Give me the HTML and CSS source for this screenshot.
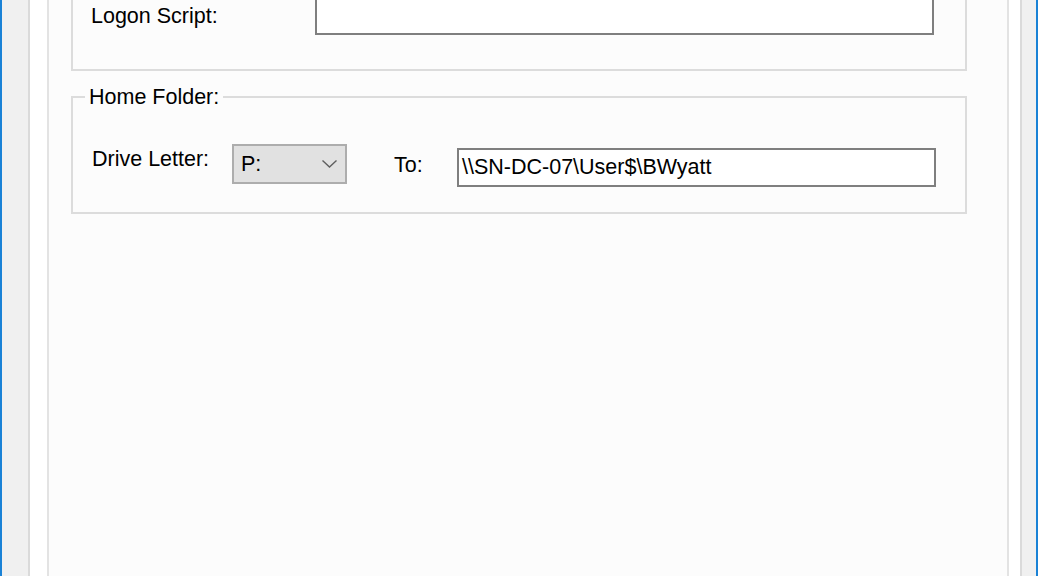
FILE: index.html
```html
<!DOCTYPE html>
<html lang="en">
<head>
  <meta charset="UTF-8">
  <meta name="viewport" content="width=device-width, initial-scale=1.0">
  <title>User Properties - Profile</title>
  <link rel="stylesheet" href="styles.css">
</head>
<body>
  <div class="window">
    <div class="tab-control">
      <div class="tab-page">
        <fieldset class="group group-logon">
          <div class="field-row logon-row">
            <label class="field-label logon-label">Logon Script:</label>
            <div class="text-box logon-box"></div>
          </div>
        </fieldset>

        <fieldset class="group group-home">
          <legend>Home Folder:</legend>
          <div class="field-row home-row">
            <label class="field-label drive-label">Drive Letter:</label>
            <div class="combo">
              <span>P:</span>
              <svg class="chevron" width="15" height="8" viewBox="0 0 15 8">
                <polyline points="0.5,0.5 7.5,7 14.5,0.5" fill="none" stroke="#5f5f5f" stroke-width="1.4"/>
              </svg>
            </div>
            <label class="field-label to-label">To:</label>
            <div class="text-box path-box">\\SN-DC-07\User$\BWyatt</div>
          </div>
        </fieldset>
      </div>
    </div>
  </div>
</body>
</html>
```

FILE: styles.css
```css
html, body {
  margin: 0;
  height: 100%;
}
body {
  font-family: "Liberation Sans", Arial, sans-serif;
  font-size: 21.5px;
  line-height: 1.15;
  color: #000;
  background-color: #f0f0f0;
  overflow: hidden;
}
.window {
  height: 576px;
  box-sizing: border-box;
  display: flex;
  background-color: #f0f0f0;
  border-left: 2px solid #1a82d6;
  border-right: 2px solid #1a82d6;
  padding: 0 14px 0 26px;
}
.tab-control {
  flex: 1;
  display: flex;
  background-color: #fff;
  border-left: 2px solid #dadada;
  border-right: 2px solid #dadada;
  padding: 0 11px 0 17px;
}
.tab-page {
  flex: 1;
  background-color: #fcfcfc;
  border-left: 2px solid #e3e3e3;
  border-right: 2px solid #e3e3e3;
  padding: 0 40px 0 22px;
}
.group {
  margin: 0;
  padding: 0;
  min-width: 0;
  border: 2px solid #dcdcdc;
}
.group legend {
  margin-left: 12px;
  padding: 0 4px;
  line-height: 24px;
}
.group-logon {
  margin-top: -40px;
}
.group-home {
  margin-top: 14px;
}
.field-row {
  display: flex;
}
.logon-row {
  align-items: center;
  padding: 35px 31px 34px 18px;
}
.home-row {
  align-items: flex-start;
  padding: 35px 29px 25px 19px;
}
.field-label {
  flex: 0 0 auto;
  white-space: nowrap;
}
.logon-label {
  width: 224px;
}
.drive-label {
  width: 140px;
  margin-top: 3px;
}
.to-label {
  width: 63px;
  margin-left: 47px;
  margin-top: 9px;
}
.text-box {
  flex: 1;
  box-sizing: border-box;
  display: flex;
  align-items: center;
  background-color: #fff;
  border: 2px solid #7f7f7f;
  padding-left: 3px;
  white-space: nowrap;
}
.logon-box {
  height: 38px;
}
.path-box {
  height: 39px;
  margin-top: 4px;
}
.combo {
  flex: 0 0 115px;
  height: 40px;
  box-sizing: border-box;
  display: flex;
  align-items: center;
  justify-content: space-between;
  background-color: #e1e1e1;
  border: 2px solid #adadad;
  padding: 0 8px 0 7px;
}
.chevron {
  display: block;
}
```
